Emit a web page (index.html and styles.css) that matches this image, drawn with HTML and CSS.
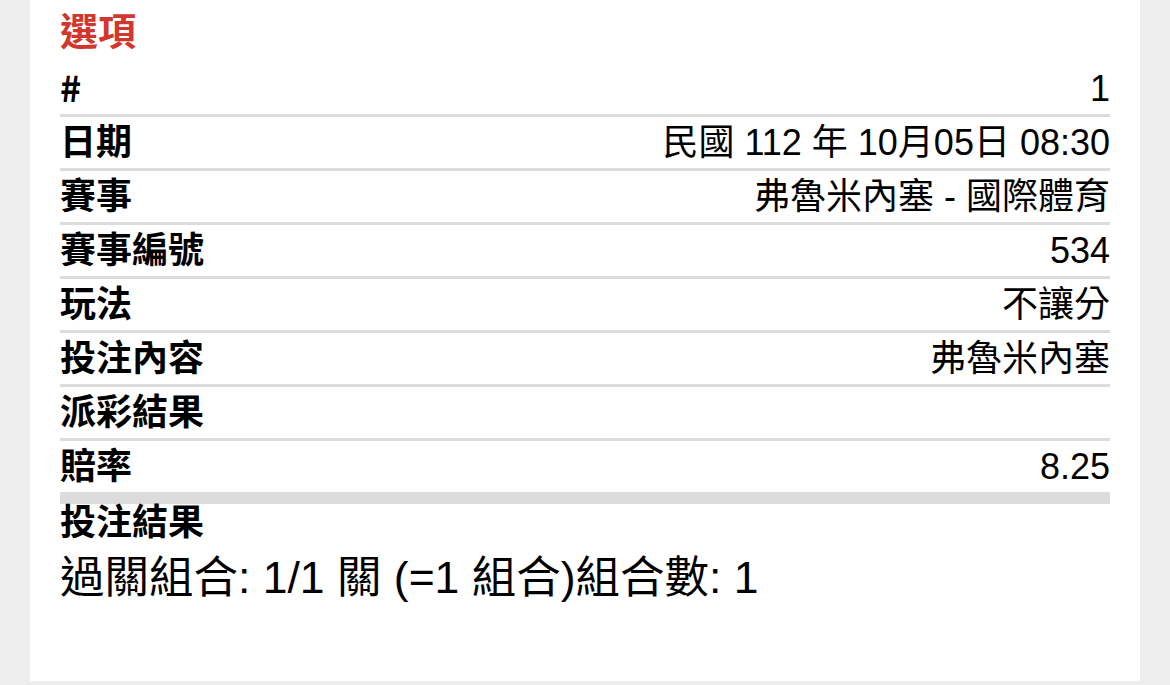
FILE: index.html
```html
<!DOCTYPE html>
<html lang="zh-Hant">
<head>
<meta charset="utf-8">
<title>選項</title>
<link rel="stylesheet" href="styles.css">
</head>
<body>
<main class="card">
  <h2 class="title">選項</h2>
  <div class="row"><span class="label label-hash">#</span><span class="value">1</span></div>
  <div class="row"><span class="label">日期</span><span class="value">民國 112 年 10月05日 08:30</span></div>
  <div class="row"><span class="label">賽事</span><span class="value">弗魯米內塞 - 國際體育</span></div>
  <div class="row"><span class="label">賽事編號</span><span class="value">534</span></div>
  <div class="row"><span class="label">玩法</span><span class="value">不讓分</span></div>
  <div class="row"><span class="label">投注內容</span><span class="value">弗魯米內塞</span></div>
  <div class="row"><span class="label">派彩結果</span><span class="value"></span></div>
  <div class="row row-last"><span class="label">賠率</span><span class="value">8.25</span></div>
  <div class="result-head"><span class="label">投注結果</span></div>
  <div class="combo">過關組合: 1/1 關 (=1 組合)組合數: 1</div>
</main>
</body>
</html>
```

FILE: styles.css
```css
html, body {
  margin: 0;
  padding: 0;
  background: #ededed;
}
body {
  font-family: "Liberation Sans", "Noto Sans CJK TC", sans-serif;
  color: #000;
}
.card {
  margin: 0 30px;
  height: 681px;
  background: #fff;
  padding: 0 30px;
  box-sizing: border-box;
  display: flex;
  flex-direction: column;
}
.title {
  margin: 0;
  height: 63px;
  line-height: 58px;
  font-size: 38px;
  font-weight: 700;
  color: #d2372d;
  font-family: "Noto Sans CJK TC", sans-serif;
}
.row {
  display: flex;
  justify-content: space-between;
  align-items: center;
  height: 51px;
  border-bottom: 3px solid #dcdcdc;
}
.row-last {
  border-bottom-width: 12px;
}
.label {
  font-family: "Liberation Sans", "Noto Sans CJK TC", sans-serif;
  font-weight: 700;
  font-size: 36px;
  line-height: 40px;
}
.label-hash {
  font-family: "Noto Sans CJK TC", sans-serif;
  margin-bottom: 6px;
}
.value {
  font-size: 36px;
  line-height: 40px;
}
.result-head {
  height: 38px;
  display: flex;
  align-items: center;
}
.combo {
  font-size: 44.5px;
  line-height: 72px;
}
```
